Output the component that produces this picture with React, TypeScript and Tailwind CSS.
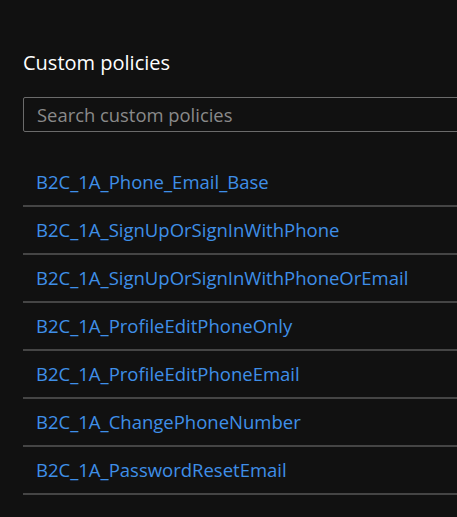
import React from "react";

const items = [
  "B2C_1A_Phone_Email_Base",
  "B2C_1A_SignUpOrSignInWithPhone",
  "B2C_1A_SignUpOrSignInWithPhoneOrEmail",
  "B2C_1A_ProfileEditPhoneOnly",
  "B2C_1A_ProfileEditPhoneEmail",
  "B2C_1A_ChangePhoneNumber",
  "B2C_1A_PasswordResetEmail",
];

export default function App() {
  return (
    <div
      className="w-[457px] h-[517px] overflow-hidden bg-[#111111]"
      style={{ fontFamily: '"Open Sans", "Noto Sans", sans-serif' }}
    >
      <div className="pl-[23px] pt-[50px] w-[480px]">
        <h1 className="text-[20px] leading-[26px] text-white font-normal">Custom policies</h1>
        <div className="mt-[21px] h-[35px] border border-[#6b6b6b] rounded-[2px] flex items-center px-[13px]">
          <span className="text-[18.4px] text-[#8a8a8a]">Search custom policies</span>
        </div>
        <ul className="mt-[27px]">
          {items.map((t) => (
            <li
              key={t}
              className="h-[48px] border-b-2 border-[#454545] flex items-center pl-[13px]"
            >
              <span className="text-[18.5px] text-[#3f8fe8]">{t}</span>
            </li>
          ))}
        </ul>
      </div>
    </div>
  );
}
